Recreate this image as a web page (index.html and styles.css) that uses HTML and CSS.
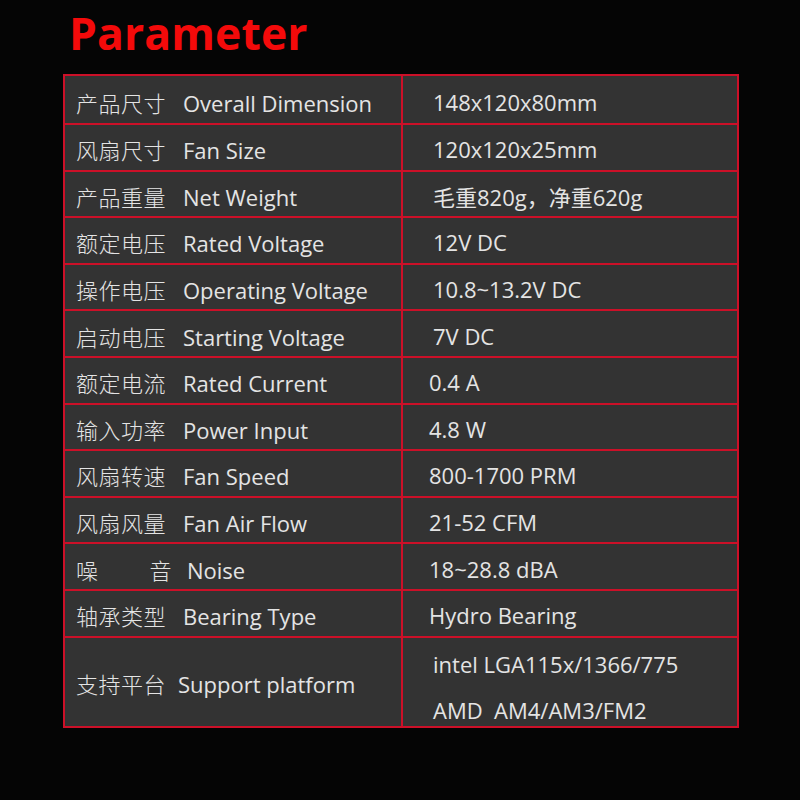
FILE: index.html
```html
<!DOCTYPE html>
<html lang="zh">
<head>
<meta charset="utf-8">
<title>Parameter</title>
<link rel="stylesheet" href="styles.css">
</head>
<body>
<div class="page">
  <h1 class="title">Parameter</h1>
  <table class="spec">
    <colgroup><col class="col-label"><col class="col-value"></colgroup>
    <tr class="first"><td class="label"><span class="cn">产品尺寸</span><span class="en">Overall Dimension</span></td><td class="value">148x120x80mm</td></tr>
    <tr><td class="label"><span class="cn">风扇尺寸</span><span class="en">Fan Size</span></td><td class="value">120x120x25mm</td></tr>
    <tr><td class="label"><span class="cn">产品重量</span><span class="en">Net Weight</span></td><td class="value">毛重820g，净重620g</td></tr>
    <tr><td class="label"><span class="cn">额定电压</span><span class="en">Rated Voltage</span></td><td class="value">12V DC</td></tr>
    <tr><td class="label"><span class="cn">操作电压</span><span class="en">Operating Voltage</span></td><td class="value">10.8~13.2V DC</td></tr>
    <tr><td class="label"><span class="cn">启动电压</span><span class="en">Starting Voltage</span></td><td class="value">7V DC</td></tr>
    <tr><td class="label"><span class="cn">额定电流</span><span class="en">Rated Current</span></td><td class="value tight">0.4 A</td></tr>
    <tr><td class="label"><span class="cn">输入功率</span><span class="en">Power Input</span></td><td class="value tight">4.8 W</td></tr>
    <tr><td class="label"><span class="cn">风扇转速</span><span class="en">Fan Speed</span></td><td class="value tight">800-1700 PRM</td></tr>
    <tr><td class="label"><span class="cn">风扇风量</span><span class="en">Fan Air Flow</span></td><td class="value tight">21-52 CFM</td></tr>
    <tr><td class="label"><span class="cn cn-spread"><span>噪</span><span>音</span></span><span class="en en-noise">Noise</span></td><td class="value tight">18~28.8 dBA</td></tr>
    <tr><td class="label"><span class="cn">轴承类型</span><span class="en">Bearing Type</span></td><td class="value tight">Hydro Bearing</td></tr>
    <tr class="double"><td class="label"><span class="cn">支持平台</span><span class="en en-support">Support platform</span></td><td class="value platforms"><div class="line">intel LGA115x/1366/775</div><div class="line">AMD&nbsp; AM4/AM3/FM2</div></td></tr>
  </table>
</div>
</body>
</html>
```

FILE: styles.css
```css
html, body {
  margin: 0;
  padding: 0;
  background: #050505;
}
.page {
  width: 800px;
  height: 800px;
  box-sizing: border-box;
  padding: 7px 0 0 63px;
}
.title {
  margin: 0 0 0 6px;
  height: 67px;
  font-family: "Open Sans", "Noto Sans", sans-serif;
  font-weight: 700;
  font-size: 44.5px;
  line-height: 52px;
  color: #f40a0a;
  letter-spacing: 0.1px;
}
.spec {
  border-collapse: collapse;
  table-layout: fixed;
  width: 676px;
  background: #333333;
  border: 2px solid #cc1028;
  font-family: "Open Sans", "Noto Sans", "Noto Sans CJK SC", sans-serif;
  font-size: 22px;
  color: #e4e4e4;
}
.col-label {
  width: 338px;
}
.spec tr {
  height: 46.6px;
}
.spec tr.first {
  height: 49px;
}
.spec tr.double {
  height: 90px;
}
.spec td {
  border: 2px solid #cc1028;
  padding: 4px 0 0 0;
  vertical-align: middle;
}
.label {
  padding-left: 11px !important;
  white-space: nowrap;
}
.label .cn {
  display: inline-block;
  width: 107px;
  font-family: "Noto Sans CJK SC", sans-serif;
  font-weight: 300;
  font-size: 22px;
  letter-spacing: 0.5px;
}
.label .cn-spread {
  display: inline-flex;
  justify-content: space-between;
  width: 96px;
  margin-right: 15px;
}
.en-support {
  margin-left: -5px;
}
.value {
  padding-left: 30px !important;
  white-space: nowrap;
}
.value.tight {
  padding-left: 26px !important;
}
.spec .double td {
  padding-top: 2px;
}
.spec .double td.platforms {
  vertical-align: top;
  padding-top: 10px;
}
.line {
  height: 32px;
  line-height: 32px;
}
.line + .line {
  margin-top: 14px;
}
```
